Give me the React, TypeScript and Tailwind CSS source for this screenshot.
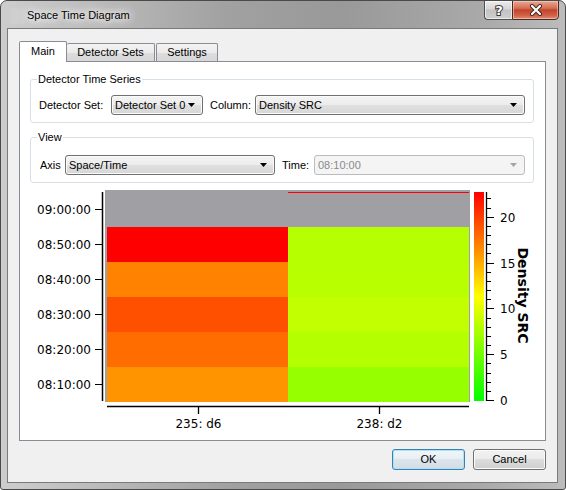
import React from 'react';

const UI = "font-['Liberation_Sans',Arial,sans-serif] text-[11px] leading-[13px] text-black";

function Combo({ w, text, disabled }: { w: string; text: string; disabled?: boolean }) {
  return (
    <div
      className={`${w} h-[20px] shrink-0 flex items-center rounded-[3px] border pl-[3px] pr-[7px] ${
        disabled
          ? 'border-[#b9bdc0] bg-[#f4f4f4] text-[#8a8a8a]'
          : 'border-[#707070] bg-[linear-gradient(#f4f4f4_0%,#ececec_50%,#e0e0e0_50%,#d6d6d6_100%)] text-black shadow-[inset_0_0_0_1px_#fbfbfb]'
      }`}
    >
      <span className="flex-1 truncate">{text}</span>
      <svg width="7" height="4" viewBox="0 0 7 4" className="shrink-0">
        <path d="M0 0H7L3.5 4Z" fill={disabled ? '#a5a5a5' : '#000'} />
      </svg>
    </div>
  );
}

function Chart() {
  const rowsY = [44, 79, 114, 149, 184];
  const left = ['#ff0000', '#ff8200', '#ff5000', '#ff6c00', '#ff9400'];
  const right = ['#b6ff00', '#b8ff00', '#c2ff00', '#b4ff00', '#96ff00'];
  const yLabels = ['09:00:00', '08:50:00', '08:40:00', '08:30:00', '08:20:00', '08:10:00'];
  const yTicks = [26.5, 61.5, 96.5, 131.5, 166.5, 201.5];
  const cbTicks = Array.from({ length: 23 }, (_, v) => v);
  const cy = (v: number) => Math.round(217.5 - 9.165 * v - 0.5) + 0.5;
  const font = "'DejaVu Sans', Verdana, sans-serif";
  return (
    <svg width="525" height="257" viewBox="0 0 525 257" className="block">
      <defs>
        <linearGradient id="cb" x1="0" y1="0" x2="0" y2="1">
          <stop offset="0" stopColor="#ff0000" />
          <stop offset="0.5" stopColor="#ffff00" />
          <stop offset="1" stopColor="#00ff00" />
        </linearGradient>
      </defs>
      <rect x="85" y="7" width="365" height="212" fill="#a0a0a4" />
      {rowsY.map((y, i) => (
        <g key={i}>
          <rect x="87" y={y} width="181" height="35" fill={left[i]} />
          <rect x="268" y={y} width="181" height="35" fill={right[i]} />
        </g>
      ))}
      <line x1="268" y1="9.5" x2="449" y2="9.5" stroke="#ff0000" strokeWidth="1" />
      {/* Y axis */}
      <line x1="82.5" y1="9" x2="82.5" y2="218" stroke="#000" strokeWidth="1.5" />
      {yTicks.map((y, i) => (
        <g key={i}>
          <line x1="75" y1={y} x2="82" y2={y} stroke="#000" strokeWidth="1" />
          <text x="71" y={y + 4.4} textAnchor="end" fontFamily={font} fontSize="12" fill="#000">
            {yLabels[i]}
          </text>
        </g>
      ))}
      {/* X axis */}
      <line x1="87" y1="223.5" x2="449" y2="223.5" stroke="#000" strokeWidth="1.5" />
      <line x1="178.5" y1="223.5" x2="178.5" y2="231" stroke="#000" strokeWidth="1.3" />
      <line x1="359.5" y1="223.5" x2="359.5" y2="231" stroke="#000" strokeWidth="1.3" />
      <text x="178.5" y="245" textAnchor="middle" fontFamily={font} fontSize="12" fill="#000">
        235: d6
      </text>
      <text x="359.5" y="245" textAnchor="middle" fontFamily={font} fontSize="12" fill="#000">
        238: d2
      </text>
      {/* Colour bar */}
      <rect x="454" y="9" width="10" height="209" fill="url(#cb)" />
      <line x1="466.5" y1="9" x2="466.5" y2="218" stroke="#000" strokeWidth="1.3" />
      {cbTicks.map((v) => (
        <line
          key={v}
          x1="466.5"
          y1={cy(v)}
          x2={v % 5 === 0 ? 474 : 471}
          y2={cy(v)}
          stroke="#000"
          strokeWidth="1"
        />
      ))}
      {[0, 5, 10, 15, 20].map((v) => (
        <text key={v} x="480" y={cy(v) + 4.4} fontFamily={font} fontSize="12" fill="#000">
          {v}
        </text>
      ))}
      <text
        x="498"
        y="112.5"
        textAnchor="middle"
        fontFamily={font}
        fontSize="14"
        fontWeight="bold"
        fill="#000"
        transform="rotate(90 498 112.5)"
      >
        Density SRC
      </text>
    </svg>
  );
}

export default function App() {
  return (
    <div
      className={`${UI} w-[566px] h-[490px] flex flex-col rounded-t-[7px] rounded-b-[3px] border border-[#4a4a4a] bg-[linear-gradient(90deg,#cdcdcd_0%,#bdbdbd_15%,#a1a1a1_40%,#999999_60%,#a9a9a9_85%,#bcbcbc_100%)] overflow-hidden`}
    >
      {/* Title bar */}
      <div className="h-[27px] flex items-start shrink-0">
        <div className="mt-[7px] ml-[9px] w-[16px] h-[16px] rounded-[2px] bg-[#d3d3d3] opacity-60 blur-[1px]" />
        <div className="ml-[1px] mt-[7px] text-[11px] leading-[14px] text-black [text-shadow:0_0_6px_#fff,0_0_10px_#fff,0_0_14px_rgba(255,255,255,0.9)]">
          Space Time Diagram
        </div>
        <div className="flex-1" />
        <div className="flex mr-[6px] -mt-px">
          <div className="w-[28px] h-[20px] rounded-bl-[4px] border border-[#505050] border-r-0 bg-[linear-gradient(#ececec_0%,#d6d6d6_45%,#c2c2c2_50%,#cfcfcf_100%)] shadow-[inset_0_0_0_1px_rgba(255,255,255,0.6)] flex items-center justify-center">
            <svg width="12" height="14" viewBox="0 0 12 14">
              <text
                x="6"
                y="12"
                textAnchor="middle"
                fontFamily="'DejaVu Sans', sans-serif"
                fontWeight="bold"
                fontSize="13"
                fill="#fff"
                stroke="#3a3a3a"
                strokeWidth="2"
                paintOrder="stroke"
              >
                ?
              </text>
            </svg>
          </div>
          <div className="w-[47px] h-[20px] rounded-br-[4px] border border-[#4a2a22] bg-[linear-gradient(#e9a893_0%,#d56e56_40%,#c3432a_50%,#cf6247_80%,#e0917a_100%)] shadow-[inset_0_0_0_1px_rgba(255,220,210,0.5)] flex items-center justify-center">
            <svg width="14" height="12" viewBox="0 0 14 12">
              <path d="M3 2L11 10M11 2L3 10" stroke="#3b2620" strokeWidth="4" strokeLinecap="round" />
              <path d="M3 2L11 10M11 2L3 10" stroke="#fff" strokeWidth="2.2" strokeLinecap="round" />
            </svg>
          </div>
        </div>
      </div>

      {/* Client area */}
      <div className="ml-[6px] w-[551px] h-[455px] shrink-0 border border-[#7a7a7a] bg-[#f0f0f0] pt-[12px] pl-[11px] pr-[11px] pb-[12px] flex flex-col">
        {/* Tabs */}
        <div className="h-[20px] flex items-end shrink-0">
          <div className="relative z-10 -mb-px w-[48px] h-[21px] border border-b-0 border-[#898c95] bg-white rounded-t-[2px] flex items-center justify-center pb-[1px]">
            Main
          </div>
          <div className="w-[88px] h-[18px] border border-b-0 border-l-0 border-[#898c95] bg-[linear-gradient(#f3f3f3_0%,#ebebeb_50%,#dddddd_50%,#d7d7d7_100%)] rounded-t-[2px] flex items-center justify-center">
            Detector Sets
          </div>
          <div className="ml-px w-[62px] h-[18px] border border-b-0 border-[#898c95] bg-[linear-gradient(#f3f3f3_0%,#ebebeb_50%,#dddddd_50%,#d7d7d7_100%)] rounded-t-[2px] flex items-center justify-center">
            Settings
          </div>
        </div>

        {/* Pane */}
        <div className="w-[527px] h-[380px] shrink-0 border border-[#898c95] bg-white flex flex-col">
          <fieldset className="ml-[10px] w-[504px] mt-[11px] rounded-[3px] border border-[#d5dfe5] px-[8px] pt-[9px] pb-[7px]">
            <legend className="-ml-[2px] px-[1px] leading-[13px]">Detector Time Series</legend>
            <div className="flex items-center">
              <span className="w-[72px] shrink-0">Detector Set:</span>
              <Combo w="w-[92px]" text="Detector Set 0" />
              <span className="ml-[7px] w-[45px] shrink-0">Column:</span>
              <Combo w="w-[270px]" text="Density SRC" />
            </div>
          </fieldset>

          <fieldset className="ml-[10px] w-[504px] mt-[8px] rounded-[3px] border border-[#d5dfe5] px-[8px] pt-[11px] pb-[7px]">
            <legend className="-ml-[2px] px-[1px] leading-[13px]">View</legend>
            <div className="flex items-center">
              <span className="pl-px w-[26px] shrink-0">Axis</span>
              <Combo w="w-[210px]" text="Space/Time" />
              <span className="ml-[7px] w-[32px] shrink-0">Time:</span>
              <Combo w="w-[211px]" text="08:10:00" disabled />
            </div>
          </fieldset>

          <Chart />
        </div>

        {/* Buttons */}
        <div className="mt-[8px] flex justify-end gap-[8px] shrink-0">
          <button className="w-[73px] h-[21px] rounded-[3px] border border-[#3c7fb1] shadow-[inset_0_0_0_1px_#a9e3fa] bg-[linear-gradient(#f1f5f8_0%,#e8eef3_50%,#dce4eb_50%,#d4dde5_100%)] flex items-center justify-center">
            OK
          </button>
          <button className="w-[73px] h-[21px] rounded-[3px] border border-[#707070] shadow-[inset_0_0_0_1px_#fbfbfb] bg-[linear-gradient(#f2f2f2_0%,#ebebeb_50%,#dddddd_50%,#cfcfcf_100%)] flex items-center justify-center">
            Cancel
          </button>
        </div>
      </div>
    </div>
  );
}
